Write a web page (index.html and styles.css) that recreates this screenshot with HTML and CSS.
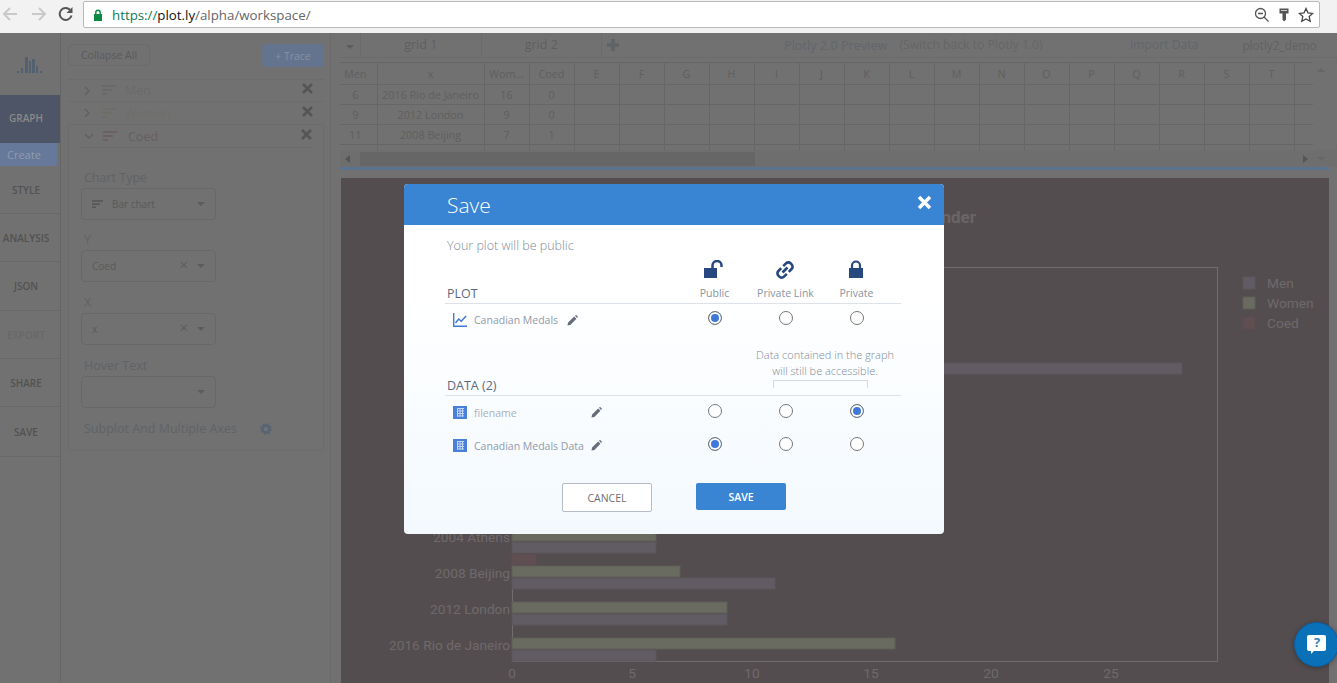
FILE: index.html
```html
<!DOCTYPE html>
<html lang="en">
<head>
  <meta charset="UTF-8" />
  <title>Plotly Workspace</title>
  <link rel="stylesheet" href="styles.css">
</head>
<body>

  <svg class="sprite" width="0" height="0">
    <symbol id="barsIcon" viewBox="0 0 14 11">
      <rect x="0" y="0" width="14" height="2" />
      <rect x="0" y="4" width="10" height="2" />
      <rect x="0" y="8" width="5" height="2" />
    </symbol>
    <symbol id="pencil" viewBox="0 0 12 12">
      <path d="M0.5 11.5 L1.2 8.3 L7.8 1.7 L10.3 4.2 L3.7 10.8 Z M8.6 0.9 L9.5 0.3 Q10 0 10.5 0.4 L11.6 1.5 Q12 2 11.7 2.5 L11.1 3.4 Z" />
    </symbol>
    <symbol id="gridIcon" viewBox="0 0 14 13">
      <rect width="14" height="13" fill="#4a80d9" />
      <rect width="1" height="13" fill="#8a5fd0" />
      <path d="M4 2.500h7M4 5h7M4 7.500h7M4 10h7M4.500 2.500v8M7 2.500v8M9.500 2.500v8" stroke="#c4d6f3" stroke-width="1" fill="none" />
    </symbol>
  </svg>

  <header class="browserBar">
    <svg class="navIcon" width="18" height="18" viewBox="0 0 18 18"><path d="M16 9H3M9 3L3 9l6 6" fill="none" stroke="#c9c9c9" stroke-width="2" /></svg>
    <svg class="navIcon" width="18" height="18" viewBox="0 0 18 18"><path d="M2 9h13M9 3l6 6-6 6" fill="none" stroke="#c9c9c9" stroke-width="2" /></svg>
    <svg class="navIcon" width="18" height="18" viewBox="0 0 18 18"><path d="M14.5 10.5A6 6 0 1 1 13 4.8" fill="none" stroke="#555" stroke-width="2" /><path d="M15.5 2v6h-6z" fill="#555" /></svg>
    <div class="omnibox">
      <svg class="urlLock" width="10" height="12" viewBox="0 0 10 12"><rect x="1" y="5" width="8" height="7" fill="#0b8a43" /><path d="M2.8 5V3.4a2.2 2.2 0 0 1 4.4 0V5" fill="none" stroke="#0b8a43" stroke-width="1.4" /></svg>
      <span class="url"><span class="urlScheme">https://</span><span class="urlHost">plot.ly</span>/alpha/workspace/</span>
      <svg class="omniIcon" width="16" height="16" viewBox="0 0 16 16"><circle cx="6.5" cy="6.5" r="5" fill="none" stroke="#555" stroke-width="1.3" /><path d="M10 10l4.5 4.5M4 6.5h5" stroke="#555" stroke-width="1.3" /></svg>
      <svg class="omniIcon" width="12" height="16" viewBox="0 0 12 16"><path d="M1.500 1.500h9v5H8v6l-2 2-1.500-2v-6h-3z" fill="#555" /><path d="M3 3.500h6" stroke="#ccc" /></svg>
      <svg class="omniIcon" width="16" height="16" viewBox="0 0 16 16"><path d="M8 1.500l2 4.400 4.700.5-3.500 3.200 1 4.700L8 11.900l-4.200 2.400 1-4.700L1.300 6.400 6 5.900z" fill="none" stroke="#444" stroke-width="1.300" /></svg>
    </div>
  </header>

  <main class="workspace">
    <nav class="sideNav">
      <div class="logoCell">
        <svg width="26" height="18" viewBox="0 0 26 18" fill="#52606f">
          <rect x="0" y="15" width="2" height="2" /><rect x="4" y="12" width="2" height="5" /><rect x="8" y="1" width="3" height="16" /><rect x="12" y="5" width="2" height="12" /><rect x="15" y="3" width="3" height="14" /><rect x="19" y="10" width="2" height="7" /><rect x="23" y="15" width="2" height="2" />
        </svg>
      </div>
      <a class="navItem navActive">GRAPH</a>
      <a class="navSub">Create</a>
      <a class="navItem">STYLE</a>
      <a class="navItem">ANALYSIS</a>
      <a class="navItem navTall">JSON</a>
      <a class="navItem navDisabled">EXPORT</a>
      <a class="navItem">SHARE</a>
      <a class="navItem navLast">SAVE</a>
    </nav>

    <section class="tracePanel">
      <div class="panelTop">
        <button class="collapseBtn">Collapse All</button>
        <button class="traceBtn">+ Trace</button>
      </div>

      <div class="traceRow traceRowFirst">
        <svg class="chev" width="7" height="10" viewBox="0 0 7 10"><path d="M1 1l4 4-4 4" /></svg>
        <svg class="barsIcon barsMen" width="14" height="11"><use href="#barsIcon" /></svg>
        <span class="traceName nameMen">Men</span>
        <svg class="removeX" width="11" height="11" viewBox="0 0 11 11"><path d="M1 1l9 9M10 1l-9 9" /></svg>
      </div>
      <div class="traceRow">
        <svg class="chev" width="7" height="10" viewBox="0 0 7 10"><path d="M1 1l4 4-4 4" /></svg>
        <svg class="barsIcon barsWomen" width="14" height="11"><use href="#barsIcon" /></svg>
        <span class="traceName nameWomen">Women</span>
        <svg class="removeX" width="11" height="11" viewBox="0 0 11 11"><path d="M1 1l9 9M10 1l-9 9" /></svg>
      </div>

      <div class="traceBox">
        <div class="traceHead">
          <svg class="chev chevDown" width="10" height="7" viewBox="0 0 10 7"><path d="M1 1l4 4 4-4" /></svg>
          <svg class="barsIcon barsCoed" width="14" height="11"><use href="#barsIcon" /></svg>
          <span class="traceName nameCoed">Coed</span>
          <svg class="removeX" width="11" height="11" viewBox="0 0 11 11"><path d="M1 1l9 9M10 1l-9 9" /></svg>
        </div>

        <label class="fieldLabel fieldFirst">Chart Type</label>
        <div class="dropdown">
          <svg class="barsIcon barsType" width="11" height="9"><use href="#barsIcon" /></svg>
          <span class="dropValue">Bar chart</span>
          <span class="caret"></span>
        </div>

        <label class="fieldLabel">Y</label>
        <div class="dropdown">
          <span class="dropValue">Coed</span>
          <span class="clearX">&times;</span>
          <span class="caret"></span>
        </div>

        <label class="fieldLabel fieldWide">X</label>
        <div class="dropdown">
          <span class="dropValue">x</span>
          <span class="clearX">&times;</span>
          <span class="caret"></span>
        </div>

        <label class="fieldLabel fieldWide">Hover Text</label>
        <div class="dropdown">
          <span class="caret"></span>
        </div>

        <div class="subplotRow">
          <span>Subplot And Multiple Axes</span>
          <svg width="12" height="12" viewBox="0 0 12 12"><circle cx="6" cy="6" r="3.500" fill="none" stroke="#586472" stroke-width="2.500" /><circle cx="6" cy="6" r="5" fill="none" stroke="#586472" stroke-width="1.500" stroke-dasharray="2 1.930" /></svg>
        </div>
      </div>
    </section>

    <section class="dataArea">
      <div class="gridTabs">
        <span class="tabArrow"><span class="caret"></span></span>
        <span class="gridTab">grid 1</span>
        <span class="gridTab">grid 2</span>
        <span class="tabPlus">
          <svg width="14" height="14" viewBox="0 0 14 14"><path d="M7 1v12M1 7h12" stroke="#5f6366" stroke-width="3.500" /></svg>
        </span>
        <span class="previewLink">Plotly 2.0 Preview</span>
        <span class="switchLink">(Switch back to Plotly 1.0)</span>
        <span class="importLink">Import Data</span>
        <span class="userName">plotly2_demo</span>
      </div>

      <div class="gridWrap">
        <div class="gridClip">
          <table class="sheet">
            <tr class="sheetHead"><th>Men</th><th>x</th><th>Wom...</th><th>Coed</th><th>E</th><th>F</th><th>G</th><th>H</th><th>I</th><th>J</th><th>K</th><th>L</th><th>M</th><th>N</th><th>O</th><th>P</th><th>Q</th><th>R</th><th>S</th><th>T</th><th>U</th></tr>
            <tr><td>6</td><td>2016 Rio de Janeiro</td><td>16</td><td>0</td><td></td><td></td><td></td><td></td><td></td><td></td><td></td><td></td><td></td><td></td><td></td><td></td><td></td><td></td><td></td><td></td><td></td></tr>
            <tr><td>9</td><td>2012 London</td><td>9</td><td>0</td><td></td><td></td><td></td><td></td><td></td><td></td><td></td><td></td><td></td><td></td><td></td><td></td><td></td><td></td><td></td><td></td><td></td></tr>
            <tr><td>11</td><td>2008 Beijing</td><td>7</td><td>1</td><td></td><td></td><td></td><td></td><td></td><td></td><td></td><td></td><td></td><td></td><td></td><td></td><td></td><td></td><td></td><td></td><td></td></tr>
            <tr class="sheetCut"><td></td><td></td><td></td><td></td><td></td><td></td><td></td><td></td><td></td><td></td><td></td><td></td><td></td><td></td><td></td><td></td><td></td><td></td><td></td><td></td><td></td></tr>
          </table>
        </div>
        <div class="vScroll"><span class="arrowUp"></span></div>
      </div>

      <div class="hScroll">
        <span class="arrowLeft"></span>
        <span class="hThumb"></span>
        <span class="arrowRight"></span>
        <span class="arrowDown"></span>
      </div>
      <div class="splitter"></div>

      <div class="chartPanel">
        <svg class="chart" width="988" height="505" viewBox="341 178 988 505">
          <text class="chartTitle" x="976" y="223" text-anchor="end">Canadian Medals by Gender</text>
          <rect class="frame" x="512.500" y="267.500" width="705" height="394" />

          <rect class="barMen" x="512" y="363" width="670" height="11" />

          <rect class="barWomen" x="512" y="530" width="144" height="11" />
          <rect class="barMen" x="512" y="542" width="144" height="11" />
          <rect class="barCoed" x="512" y="554" width="24" height="11" />
          <rect class="barWomen" x="512" y="566" width="168" height="11" />
          <rect class="barMen" x="512" y="578" width="263" height="11" />
          <rect class="barWomen" x="512" y="602" width="215" height="11" />
          <rect class="barMen" x="512" y="614" width="215" height="11" />
          <rect class="barWomen" x="512" y="638" width="383" height="11" />
          <rect class="barMen" x="512" y="650" width="144" height="11" />

          <text class="tick" x="510" y="542" text-anchor="end">2004 Athens</text>
          <text class="tick" x="510" y="578" text-anchor="end">2008 Beijing</text>
          <text class="tick" x="510" y="614" text-anchor="end">2012 London</text>
          <text class="tick" x="510" y="650" text-anchor="end">2016 Rio de Janeiro</text>

          <text class="tick" x="512" y="678" text-anchor="middle">0</text>
          <text class="tick" x="632" y="678" text-anchor="middle">5</text>
          <text class="tick" x="752" y="678" text-anchor="middle">10</text>
          <text class="tick" x="871" y="678" text-anchor="middle">15</text>
          <text class="tick" x="991" y="678" text-anchor="middle">20</text>
          <text class="tick" x="1111" y="678" text-anchor="middle">25</text>

          <rect class="barMen" x="1243" y="277" width="12" height="12" />
          <rect class="barWomen" x="1243" y="297" width="12" height="12" />
          <rect class="barCoed" x="1243" y="317" width="12" height="12" />
          <text class="tick" x="1267" y="288">Men</text>
          <text class="tick" x="1267" y="308">Women</text>
          <text class="tick" x="1267" y="328">Coed</text>
        </svg>
      </div>
    </section>
  </main>

  <div class="modal">
    <div class="modalHead">
      <span class="modalTitle">Save</span>
      <svg class="modalClose" width="15" height="15" viewBox="0 0 15 15"><path d="M2 2l11 11M13 2L2 13" /></svg>
    </div>
    <div class="modalBody">
      <p class="publicNote">Your plot will be public</p>

      <div class="saveGrid saveHead">
        <span class="sectionName">PLOT</span>
        <div class="privacyCol">
          <svg width="22" height="20" viewBox="0 0 22 20"><rect x="1" y="8" width="13" height="10" fill="#27477f" /><path d="M9.500 8V5.500a4.500 4.500 0 0 1 9 0V7" fill="none" stroke="#27477f" stroke-width="2.500" /></svg>
          <span>Public</span>
        </div>
        <div class="privacyCol">
          <svg width="20" height="20" viewBox="0 0 20 20" fill="none" stroke="#27477f" stroke-width="2.600"><path d="M8.200 6.200l2.800-2.800a3.300 3.300 0 0 1 4.700 0l.9.900a3.300 3.300 0 0 1 0 4.700l-2.800 2.800" /><path d="M11.800 13.800L9 16.600a3.300 3.300 0 0 1-4.700 0l-.9-.9a3.300 3.300 0 0 1 0-4.700l2.800-2.800" /><path d="M7.500 12.500l5-5" /></svg>
          <span>Private Link</span>
        </div>
        <div class="privacyCol">
          <svg width="16" height="20" viewBox="0 0 16 20"><rect x="1" y="8" width="14" height="10" fill="#27477f" /><path d="M4 9V5.500a4 4 0 0 1 8 0V9" fill="none" stroke="#27477f" stroke-width="2.200" /></svg>
          <span>Private</span>
        </div>
      </div>

      <div class="saveGrid plotRow">
        <div class="fileCell">
          <svg class="fileIcon" width="14" height="14" viewBox="0 0 14 14" fill="none" stroke="#3f78d8"><path d="M0.700 0v13.300H14" stroke-width="1.400" /><path d="M2.500 10l3.200-4 2.600 2.300L13 3" stroke-width="1.500" /></svg>
          <span class="fileName plotName">Canadian Medals</span>
          <svg class="pencilIcon" width="11" height="11"><use href="#pencil" /></svg>
        </div>
        <input type="radio" name="plot" checked />
        <input type="radio" name="plot" />
        <input type="radio" name="plot" />
      </div>

      <div class="saveGrid saveHead dataHead">
        <span class="sectionName">DATA (2)</span>
        <div class="accessNote">
          <span>Data contained in the graph<br />will still be accessible.</span>
          <div class="noteBracket"></div>
        </div>
      </div>

      <div class="saveGrid saveRow">
        <div class="fileCell">
          <svg class="fileIcon" width="14" height="13"><use href="#gridIcon" /></svg>
          <span class="fileName fileDim">filename</span>
          <svg class="pencilIcon" width="11" height="11"><use href="#pencil" /></svg>
        </div>
        <input type="radio" name="grid1" />
        <input type="radio" name="grid1" />
        <input type="radio" name="grid1" checked />
      </div>

      <div class="saveGrid saveRow">
        <div class="fileCell">
          <svg class="fileIcon" width="14" height="13"><use href="#gridIcon" /></svg>
          <span class="fileName">Canadian Medals Data</span>
          <svg class="pencilIcon" width="11" height="11"><use href="#pencil" /></svg>
        </div>
        <input type="radio" name="grid2" checked />
        <input type="radio" name="grid2" />
        <input type="radio" name="grid2" />
      </div>

      <div class="modalActions">
        <button class="cancelBtn">CANCEL</button>
        <button class="saveBtn">SAVE</button>
      </div>
    </div>
  </div>

  <div class="helpBubble">
    <svg width="20" height="20" viewBox="0 0 20 20"><path d="M2 0h15a2 2 0 0 1 2 2v12a2 2 0 0 1-2 2H7l-3 3v-3H2a2 2 0 0 1-2-2V2a2 2 0 0 1 2-2z" fill="#fff" /></svg>
    <span class="helpMark">?</span>
  </div>

</body>
</html>
```

FILE: styles.css
```css
* {
  box-sizing: border-box;
}

html, body {
  margin: 0;
  height: 683px;
  overflow: hidden;
}

body {
  position: relative;
  font-family: 'Open Sans', 'Noto Sans', sans-serif;
  background: #717171;
  color: #5f5f5f;
}

.sprite {
  position: absolute;
}

/* browser toolbar */
.browserBar {
  display: flex;
  align-items: flex-start;
  height: 33px;
  padding: 1px 17px 0 0;
  background: #f2f2f2;
}

.navIcon {
  flex: none;
  margin-top: 4px;
}

.navIcon:nth-child(1) { margin-left: 1px; }
.navIcon:nth-child(2) { margin-left: 11px; }
.navIcon:nth-child(3) { margin-left: 9px; margin-right: 8px; }

.omnibox {
  flex: 1;
  display: flex;
  align-items: center;
  height: 27px;
  padding: 0 5px 0 9px;
  background: #fff;
  border: 1px solid #b9b9b9;
  border-radius: 2px;
}

.urlLock {
  margin-right: 9px;
}

.url {
  flex: 1;
  font-size: 13.300px;
  color: #666;
}

.urlScheme { color: #0b7a55; }
.urlHost { color: #111; }

.omniIcon {
  margin-left: 8px;
}

/* main app */
.workspace {
  display: flex;
  height: 650px;
}

.sideNav {
  flex: none;
  width: 61px;
  border-right: 1px solid #666;
}

.logoCell {
  display: flex;
  justify-content: center;
  align-items: center;
  height: 62px;
  padding-top: 1px;
}

.navItem {
  display: flex;
  justify-content: center;
  align-items: center;
  height: 48px;
  padding: 1px 8px 0 0;
  border-bottom: 1px solid #696969;
  font-size: 10px;
  font-weight: 600;
  color: #525252;
}

.navActive {
  padding: 0 8px 2px 0;
  background: #4e5566;
  color: #8a8a8a;
  border-bottom: 0;
}

.navSub {
  display: block;
  width: 57px;
  height: 23px;
  padding: 4px 0 0 7px;
  background: #66799a;
  font-size: 11px;
  color: #8f9cb0;
}

.navDisabled {
  color: #686868;
}

.navTall {
  height: 49px;
  padding-top: 0;
}

.navLast {
  height: 50px;
  padding-top: 0;
}

.tracePanel {
  flex: none;
  width: 270px;
  padding: 11px 6px 0 7px;
  border-right: 1px solid #6a6a6a;
}

.panelTop {
  display: flex;
  justify-content: space-between;
  margin-bottom: 12px;
}

.panelTop button {
  font-family: inherit;
  font-size: 10.500px;
  border-radius: 4px;
}

.collapseBtn {
  width: 82px;
  height: 22px;
  padding: 0;
  background: transparent;
  border: 1px solid #6b6b6b;
  color: #5a5a5a;
}

.traceBtn {
  width: 62px;
  height: 23px;
  padding: 0;
  background: #65748e;
  border: 0;
  color: #8590a2;
}

.traceRow,
.traceHead {
  display: flex;
  align-items: center;
  height: 23px;
  padding: 0 11px 0 16px;
  border-top: 1px solid #6c6c6c;
}

.traceRowFirst {
  height: 22px;
}

.traceHead {
  margin: 0 12px;
  padding: 0 0 0 4px;
  border-top: 0;
  border-bottom: 1px solid #6c6c6c;
}

.chev {
  flex: none;
  fill: none;
  stroke: #5f5f5f;
  stroke-width: 1.300;
  margin-right: 11px;
}

.chevDown {
  margin-right: 9px;
  margin-left: -1px;
}

.barsIcon {
  flex: none;
  margin-right: 9px;
}

.barsMen { fill: #696969; }
.barsWomen { fill: #6d6e66; }
.barsCoed { fill: #6c6062; }
.barsType { fill: #555; margin-right: 9px; }

.traceName {
  flex: 1;
  font-size: 12.500px;
  margin-left: 0;
}

.nameMen { color: #6a6a6a; }
.nameWomen { color: #6e6f69; }
.nameCoed { color: #665f60; margin-left: 2px; }

.removeX {
  flex: none;
  fill: none;
  stroke: #555;
  stroke-width: 2.600;
  margin-top: -4px;
}

.traceBox {
  height: 327px;
  border: 1px solid #6c6c6c;
}

.traceBox .removeX {
  margin-right: -1px;
}

.fieldLabel {
  display: block;
  margin: 10px 0 0 15px;
  height: 20px;
  line-height: 20px;
  font-size: 12.500px;
  color: #5f6368;
}

.fieldFirst {
  margin-top: 20px;
}

.fieldWide {
  margin-top: 11px;
}

.dropdown {
  display: flex;
  align-items: center;
  width: 135px;
  height: 32px;
  margin-left: 12px;
  padding: 0 10px;
  border: 1px solid #686868;
  border-radius: 4px;
}

.dropValue {
  flex: 1;
  font-size: 10px;
  color: #5a5a5a;
}

.clearX {
  font-size: 15px;
  line-height: 14px;
  color: #5d5d5d;
  margin-right: 9px;
  margin-top: -4px;
}

.caret {
  display: inline-block;
  margin-left: auto;
  width: 0;
  height: 0;
  border-left: 4px solid transparent;
  border-right: 4px solid transparent;
  border-top: 4px solid #5c5c5c;
}

.subplotRow {
  display: flex;
  align-items: center;
  margin: 12px 0 0 15px;
  font-size: 12.500px;
  color: #5f6368;
}

.subplotRow svg {
  margin-left: 23px;
}

/* grid */
.dataArea {
  flex: 1;
  min-width: 0;
  padding-left: 9px;
}

.gridTabs {
  display: flex;
  align-items: center;
  height: 25px;
  padding-bottom: 1px;
  border-bottom: 1px solid #6b6b6b;
  font-size: 12.200px;
  color: #5f5f5f;
}

.tabArrow {
  display: flex;
  align-items: center;
  justify-content: center;
  width: 21px;
  height: 100%;
  border-right: 1px solid #6b6b6b;
}

.tabArrow .caret {
  margin: 4px 0 0;
}

.gridTab {
  display: flex;
  align-items: center;
  justify-content: center;
  width: 120.500px;
  height: 100%;
  border-right: 1px solid #6b6b6b;
  font-size: 12.500px;
}

.tabPlus {
  display: flex;
  margin-left: 4px;
}

.previewLink {
  margin-left: 164px;
  font-size: 12.700px;
  color: #61666d;
}

.switchLink {
  margin-left: 12px;
  color: #666;
}

.importLink {
  margin-left: 87px;
  color: #61666d;
}

.userName {
  margin-left: 44px;
  font-size: 11.800px;
  color: #616161;
}

.gridWrap {
  display: flex;
  height: 88px;
  margin-top: 4px;
}

.gridClip {
  width: 973px;
  height: 88px;
  overflow: hidden;
}

.sheet {
  table-layout: fixed;
  width: 999px;
  border-collapse: collapse;
  font-size: 10.800px;
}

.sheet th,
.sheet td {
  width: 45px;
  height: 20px;
  padding: 0;
  border: 1px solid #666;
  border-left: 0;
  text-align: center;
  font-weight: 400;
  color: #5f5f5f;
  white-space: nowrap;
  overflow: hidden;
}

.sheetHead th {
  height: 22px;
}

.sheet th:nth-child(1),
.sheet td:nth-child(1) {
  padding-right: 6px;
}

.sheet th:nth-child(1) { width: 37px; }
.sheet th:nth-child(2) { width: 107px; }

.vScroll {
  flex: none;
  width: 16px;
  padding: 6px 0 0 4px;
}

.arrowUp,
.arrowDown {
  display: block;
  width: 0;
  height: 0;
  border-left: 4px solid transparent;
  border-right: 4px solid transparent;
}

.arrowUp { border-bottom: 4px solid #666; }
.arrowDown { border-top: 4px solid #666; margin-left: 9px; }

.hScroll {
  display: flex;
  align-items: center;
  height: 17px;
  padding: 0 12px 0 5px;
  background: #6e6e6e;
}

.arrowLeft,
.arrowRight {
  display: block;
  width: 0;
  height: 0;
  border-top: 4px solid transparent;
  border-bottom: 4px solid transparent;
}

.arrowLeft { border-right: 5px solid #555; }
.arrowRight { border-left: 5px solid #555; margin-left: auto; }

.hThumb {
  width: 395px;
  height: 14px;
  margin-left: 10px;
  background: #666;
}

.splitter {
  height: 3px;
  background: #5a7490;
  margin-right: 7px;
}

.chartPanel {
  margin-top: 8px;
  margin-left: 1px;
  width: 988px;
  height: 505px;
  background: #544d4f;
}

.chart {
  display: block;
  font-family: Roboto, sans-serif;
}

.chartTitle {
  font-size: 17px;
  font-weight: 700;
  fill: #6a6566;
}

.frame {
  fill: none;
  stroke: #716d6e;
}

.tick {
  font-size: 13.700px;
  fill: #6e6a6b;
}

.barMen { fill: #615c63; stroke: #5b565c; }
.barWomen { fill: #696a60; stroke: #5f5e56; }
.barCoed { fill: #5f4f53; stroke: #5c4d50; }

/* save dialog */
.modal {
  position: absolute;
  left: 404px;
  top: 184px;
  width: 540px;
  height: 350px;
  border-radius: 4px;
  overflow: hidden;
  background: linear-gradient(to bottom, #fff 30%, #f3f9fe);
}

.modalHead {
  display: flex;
  justify-content: space-between;
  align-items: center;
  height: 41px;
  padding: 0 12px 0 43px;
  background: #3a84d4;
}

.modalTitle {
  font-size: 21px;
  font-weight: 300;
  color: #fff;
}

.modalClose {
  fill: none;
  stroke: #fff;
  stroke-width: 3.500;
  margin-top: -4px;
}

.modalBody {
  padding: 0 43px 0 41px;
}

.publicNote {
  margin: 12px 0 0 2px;
  height: 18px;
  line-height: 18px;
  font-size: 12.500px;
  font-weight: 300;
  color: #7d8a9a;
}

.saveGrid {
  display: grid;
  grid-template-columns: 1fr 71px 71px 71px 9px;
  align-items: end;
  justify-items: center;
}

.saveHead {
  border-bottom: 1px solid #dde1e8;
}

.sectionName {
  justify-self: start;
  margin: 0 0 1px 2px;
  font-size: 12.500px;
  color: #5c6a7e;
}

.privacyCol {
  display: flex;
  flex-direction: column;
  align-items: center;
  gap: 6px;
  height: 45px;
  margin-top: 3px;
  padding-top: 2px;
  font-size: 10.500px;
  color: #8994a3;
}

.saveRow {
  align-items: center;
  height: 33px;
  padding-bottom: 3px;
}

.plotRow {
  align-items: center;
  height: 28px;
}

.dataHead {
  height: 64px;
}

.accessNote {
  grid-column: 2 / 6;
  justify-self: end;
  width: 152px;
  text-align: center;
  font-size: 11px;
  font-weight: 300;
  line-height: 16px;
  color: #7d8a9a;
}

.noteBracket {
  width: 95px;
  height: 8px;
  margin: 1px 0 7px 24px;
  border: 1px solid #d5dae2;
  border-bottom: 0;
}

.fileCell {
  display: flex;
  align-items: center;
  justify-self: stretch;
  padding: 3px 0 0 8px;
}

.plotRow .fileCell {
  padding-top: 4px;
}

.fileIcon {
  flex: none;
  margin-right: 7px;
}

.fileName {
  width: 117px;
  font-size: 10.500px;
  color: #8f9aaa;
  white-space: nowrap;
}

.plotName {
  width: 93px;
}

.fileDim {
  color: #a9b0ba;
}

.pencilIcon {
  flex: none;
  fill: #666c7a;
}

input[type="radio"] {
  appearance: none;
  width: 14px;
  height: 14px;
  margin: 0;
  border: 1px solid #777;
  border-radius: 50%;
  background: #fff;
}

input[type="radio"]:checked {
  background: #3f78d8;
  box-shadow: inset 0 0 0 2px #fff;
}

.modalActions {
  display: flex;
  margin: 21px 0 0 117px;
  gap: 44px;
  align-items: flex-start;
}

.modalActions button {
  width: 90px;
  font-family: inherit;
  font-size: 10.500px;
  border-radius: 2px;
  padding: 0;
}

.cancelBtn {
  height: 29px;
  background: #fff;
  border: 1px solid #b5bcc8;
  color: #6f6f6f;
}

.saveBtn {
  height: 27px;
  background: #3a84d4;
  border: 0;
  color: #fff;
  font-weight: 600;
}

/* help button */
.helpBubble {
  position: absolute;
  left: 1294px;
  top: 622px;
  width: 45px;
  height: 45px;
  border-radius: 50%;
  background: #0a70b8;
  border: 1px solid #0b5ea3;
  box-shadow: 0 1px 5px rgba(0, 0, 0, 0.3);
}

.helpBubble svg {
  position: absolute;
  left: 12px;
  top: 12px;
}

.helpMark {
  position: absolute;
  left: 12px;
  width: 20px;
  top: 11px;
  text-align: center;
  font-size: 13px;
  font-weight: 700;
  line-height: 16px;
  color: #2f7fc0;
}
```
